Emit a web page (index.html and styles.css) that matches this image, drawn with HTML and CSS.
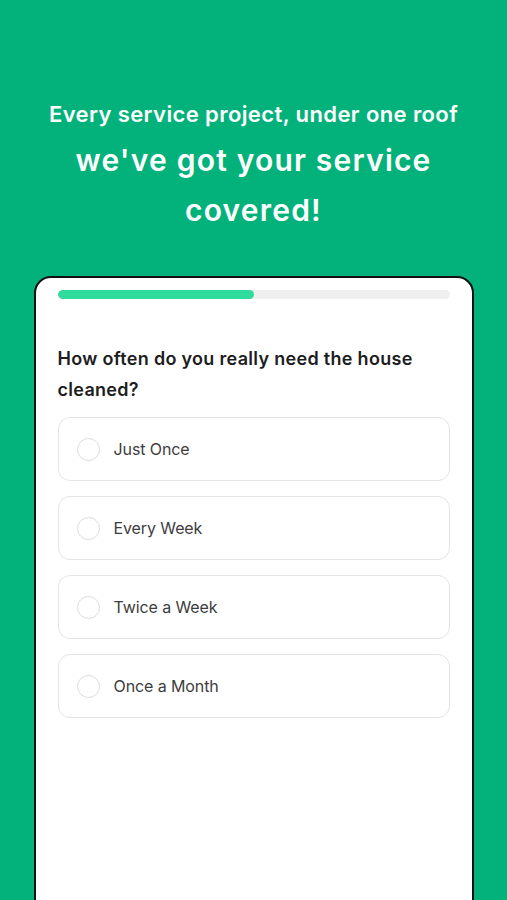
FILE: index.html
```html
<!DOCTYPE html>
<html lang="en">
<head>
<meta charset="utf-8">
<title>Service</title>
<link rel="stylesheet" href="styles.css">
</head>
<body>
<div class="page">
  <header class="hero">
    <p class="tagline">Every service project, under one roof</p>
    <h1 class="title">we've got your service covered!</h1>
  </header>
  <main class="card">
    <div class="progress"><div class="progress-fill" style="width:50%"></div></div>
    <h2 class="question">How often do you really need the house cleaned?</h2>
    <div class="options">
      <label class="option"><span class="radio"></span><span class="opt-text">Just Once</span></label>
      <label class="option"><span class="radio"></span><span class="opt-text">Every Week</span></label>
      <label class="option"><span class="radio"></span><span class="opt-text">Twice a Week</span></label>
      <label class="option"><span class="radio"></span><span class="opt-text">Once a Month</span></label>
    </div>
  </main>
</div>
</body>
</html>
```
FILE: styles.css
```css
html, body {
  margin: 0;
  padding: 0;
  height: 100%;
  overflow: hidden;
}
body {
  background: #03b27b;
  font-family: "Inter", "Noto Sans", sans-serif;
}
.page {
  display: flex;
  flex-direction: column;
  align-items: center;
}
.hero {
  padding-top: 100px;
  text-align: center;
  color: #fff;
  width: 100%;
}
.tagline {
  margin: 0;
  font-size: 22px;
  font-weight: 600;
  line-height: 28px;
  letter-spacing: 0.4px;
}
.title {
  margin: 7px auto 0;
  width: 400px;
  font-size: 30px;
  font-weight: 600;
  line-height: 50px;
  letter-spacing: 1.2px;
}
.card {
  box-sizing: border-box;
  margin-top: 41px;
  width: 440px;
  height: 700px;
  background: #fff;
  border: 2px solid #111;
  border-radius: 17px;
  padding: 12px 22px 0;
}
.progress {
  height: 9px;
  border-radius: 5px;
  background: #efefef;
  overflow: hidden;
}
.progress-fill {
  height: 100%;
  background: #2fdc9e;
  border-radius: 5px;
}
.question {
  margin: 44px 0 0;
  font-size: 18px;
  font-weight: 600;
  line-height: 31px;
  color: #1d1d1d;
  letter-spacing: 0.3px;
}
.options {
  margin-top: 12px;
  display: flex;
  flex-direction: column;
  gap: 15px;
}
.option {
  box-sizing: border-box;
  height: 64px;
  border: 1px solid #e4e4e4;
  border-radius: 12px;
  display: flex;
  align-items: center;
  padding-left: 18px;
  gap: 14px;
}
.radio {
  box-sizing: border-box;
  width: 23px;
  height: 23px;
  border: 1px solid #dcdcdc;
  border-radius: 50%;
}
.opt-text {
  font-size: 16px;
  color: #3d3d3d;
  letter-spacing: -0.1px;
}
```
